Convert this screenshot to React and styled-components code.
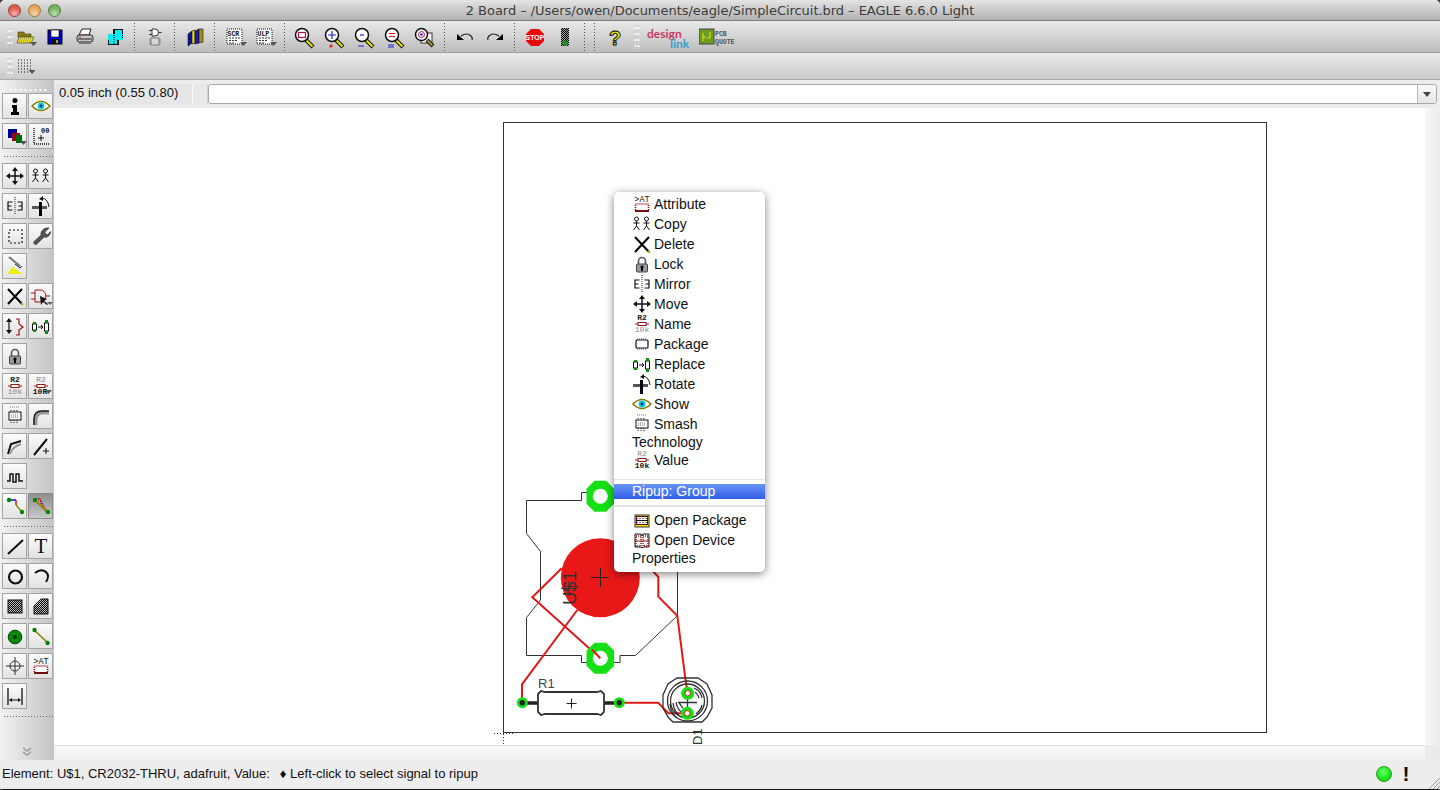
import React from 'react';
import styled, { createGlobalStyle } from 'styled-components';

const GlobalStyle = createGlobalStyle`
  html, body {
    margin: 0;
    padding: 0;
    background: #333;
  }
  body {
    font-family: "Liberation Sans", Arial, sans-serif;
  }
`;

const Dropdown = () => <path d="M17 17h7l-3.5 4z" fill="#555" />;

const Dither = ({ id, color = '#000', back = '#fff' }) => (
  <pattern id={id} width="2" height="2" patternUnits="userSpaceOnUse">
    <rect width="2" height="2" fill={back} />
    <rect width="1" height="1" fill={color} />
    <rect x="1" y="1" width="1" height="1" fill={color} />
  </pattern>
);

const Magnifier = ({ children }) => (
  <>
    <path d="M13 15l7 7" stroke="#111" strokeWidth="4" />
    <path d="M13.5 15.5l6 6" stroke="#e8e800" strokeWidth="2" />
    <circle cx="9" cy="10" r="6.5" fill="#fff" stroke="#111" strokeWidth="1.5" />
    {children}
  </>
);

const labelFont = '"Liberation Mono", monospace';

const ICONS = {
  // top toolbar
  open: (
    <>
      <path d="M5 7h6l1 2h6v3H5z" fill="#8a7a10" stroke="#443" strokeWidth=".6" />
      <path d="M6 12h15l-3 6H4z" fill="#e8e020" stroke="#554" strokeWidth=".8" />
      <path d="M7 14h11M6 16h11" stroke="#887" strokeDasharray="1 1" />
      <Dropdown />
    </>
  ),
  save: (
    <>
      <rect x="5" y="5" width="14" height="14" fill="#0000e0" stroke="#000" />
      <rect x="8" y="5" width="8" height="7" fill="#fff" stroke="#000" strokeWidth=".6" />
      <rect x="8" y="14" width="8" height="5" fill="#111" />
      <rect x="13" y="15" width="2" height="3" fill="#999" />
    </>
  ),
  print: (
    <>
      <path d="M9 4h9l-2 6H6z" fill="#fff" stroke="#222" />
      <rect x="4" y="10" width="16" height="7" rx="2.5" fill="#c4c4c4" stroke="#222" />
      <path d="M5 14h14" stroke="#222" />
      <path d="M6 12h2" stroke="#d04040" />
      <rect x="6" y="17" width="12" height="2" fill="#777" />
    </>
  ),
  cam: (
    <>
      <rect x="10" y="4" width="10" height="6" fill="#111" />
      <rect x="5" y="14" width="11" height="6" fill="#111" />
      <rect x="5" y="9" width="15" height="6" fill="#10e8f0" />
      <rect x="12" y="5" width="7" height="10" fill="#10e8f0" />
      <rect x="6" y="14" width="8" height="5" fill="#10e8f0" />
      <path d="M11 4v15M19.5 4v10M5.5 15v5" stroke="#111" strokeDasharray="1 1" />
    </>
  ),
  sch: (
    <>
      <path d="M9 4h3a3.5 3.5 0 0 1 0 7H9z" fill="#fff" stroke="#333" />
      <path d="M6 5.5h3M6 9.5h3M15.5 7.5h3" stroke="#333" />
      <rect x="8" y="13" width="8" height="7" fill="#d8d8d8" stroke="#777" />
      <path d="M6 15h2M6 18h2M16 15h2M16 18h2" stroke="#777" />
    </>
  ),
  book: (
    <>
      <path d="M5 9l4-3v12l-4 3z" fill="#1010a0" stroke="#111" strokeWidth=".6" />
      <path d="M9 6l3-1v13l-3 1z" fill="#e8d810" stroke="#111" strokeWidth=".6" />
      <path d="M12 6l4-2v14l-4 1z" fill="#1818c0" stroke="#111" strokeWidth=".6" />
      <path d="M16 4h4v13l-4 1z" fill="#a09010" stroke="#111" strokeWidth=".6" />
    </>
  ),
  scr: (
    <>
      <rect x="4" y="4" width="15" height="15" fill="#fff" stroke="#111" strokeDasharray="1 1" />
      <text x="4.5" y="10.5" fontFamily={labelFont} fontWeight="700" fontSize="6.5" fill="#111">SCR</text>
      <path d="M6 13h11M6 15.5h8M6 18h5" stroke="#333" strokeDasharray="2 1" />
      <Dropdown />
    </>
  ),
  ulp: (
    <>
      <rect x="4" y="4" width="15" height="15" fill="#fff" stroke="#111" strokeDasharray="1 1" />
      <text x="4.5" y="10.5" fontFamily={labelFont} fontWeight="700" fontSize="6.5" fill="#111">ULP</text>
      <path d="M6 13h11M6 15.5h8M6 18h5" stroke="#333" strokeDasharray="2 1" />
      <Dropdown />
    </>
  ),
  zoomFit: (
    <Magnifier>
      <rect x="5.5" y="7.5" width="7" height="5" fill="#fff" stroke="#b01050" strokeWidth="1.2" />
    </Magnifier>
  ),
  zoomIn: (
    <>
      <Magnifier>
        <path d="M9 6v8M5 10h8" stroke="#2020d0" strokeWidth="1.2" />
      </Magnifier>
      <path d="M6 21h4M8 19v4" stroke="#e01010" />
    </>
  ),
  zoomOut: (
    <>
      <Magnifier>
        <path d="M7 10h4" stroke="#2020d0" strokeWidth="1.2" />
      </Magnifier>
      <path d="M5 21h6" stroke="#2020d0" />
    </>
  ),
  zoomEqual: (
    <>
      <Magnifier>
        <path d="M6 8.5h6M6 11.5h6" stroke="#e01010" strokeWidth="1.2" />
      </Magnifier>
      <path d="M5 20h6M5 22h6" stroke="#2020d0" />
    </>
  ),
  zoomRedraw: (
    <>
      <rect x="8" y="8" width="11" height="10" fill="#fff" stroke="#333" />
      <path d="M14 15l6 6" stroke="#111" strokeWidth="4" />
      <path d="M14.5 15.5l5 5" stroke="#a8a020" strokeWidth="2" />
      <circle cx="8.5" cy="9.5" r="6" fill="#fff" stroke="#111" strokeWidth="1.5" />
      <circle cx="8.5" cy="9.5" r="3" fill="#fff" stroke="#c01040" />
      <circle cx="8.5" cy="9.5" r="1.3" fill="#2020d0" />
    </>
  ),
  undo: (
    <>
      <path d="M8 11q6-4 10 0 2 2 1 4" fill="none" stroke="#222" strokeWidth="1.2" />
      <path d="M4 9v6h7z" fill="#000" />
    </>
  ),
  redo: (
    <>
      <path d="M16 11q-6-4-10 0-2 2-1 4" fill="none" stroke="#222" strokeWidth="1.2" />
      <path d="M20 9v6h-7z" fill="#000" />
    </>
  ),
  stop: (
    <>
      <path d="M8 4h8l5 5v7l-5 5H8l-5-5V9z" fill="#e80808" />
      <text x="12" y="15" textAnchor="middle" fontFamily='"Liberation Sans", sans-serif' fontWeight="700" fontSize="7" fill="#fff">STOP</text>
    </>
  ),
  go: (
    <>
      <defs>
        <Dither id="goDots" back="#999" />
      </defs>
      <rect x="8" y="3" width="8" height="18" fill="url(#goDots)" />
      <circle cx="12" cy="18" r="2.5" fill="#0c9c0c" />
    </>
  ),
  help: (
    <text x="12" y="19.5" textAnchor="middle" fontFamily='"Liberation Sans", sans-serif' fontWeight="700" fontSize="20" fill="#f4f400" stroke="#000" strokeWidth=".9">?</text>
  ),
  grid: (
    <>
      <path d="M5 3h13M5 6h13M5 9h13M5 12h13M5 15h10" stroke="#111" strokeDasharray="1 2" />
      <path d="M15.5 13h7l-3.5 4z" fill="#555" />
    </>
  ),

  // side toolbar and menu
  info: (
    <>
      <circle cx="12" cy="6.5" r="2.5" fill="#000" />
      <path d="M9 11h5v7h2v3H8v-3h2v-4H9z" fill="#000" />
    </>
  ),
  eye: (
    <>
      <path d="M3 12q9-9 18 0-9 9-18 0z" fill="#fff" stroke="#8a7a00" strokeWidth="1.5" />
      <circle cx="12" cy="12" r="3.4" fill="#00d0e0" />
      <circle cx="12" cy="12" r="1.4" fill="#002080" />
    </>
  ),
  display: (
    <>
      <rect x="5" y="5" width="9" height="9" fill="#000090" />
      <rect x="9" y="9" width="8" height="8" fill="#a00020" />
      <rect x="13" y="11" width="6" height="8" fill="#006800" />
      <Dropdown />
    </>
  ),
  mark: (
    <>
      <path d="M5 4v16M5 20h16" stroke="#111" strokeWidth="1.5" strokeDasharray="1 1" />
      <path d="M12 11v6M9 14h6" stroke="#111" />
      <text x="12" y="9" fontFamily={labelFont} fontSize="7" fontWeight="700" fill="#111">00</text>
    </>
  ),
  move: (
    <>
      <path d="M12 5v14M5 12h14" stroke="#111" strokeWidth="1.5" />
      <path d="M12 3l3 4H9zM12 21l3-4H9zM3 12l4-3v6zM21 12l-4-3v6z" fill="#111" />
    </>
  ),
  copy: (
    <g fill="none" stroke="#111">
      <circle cx="6.5" cy="7" r="2" />
      <path d="M6.5 9v5M3.5 11h6M6.5 14l-3 4M6.5 14l3 4" />
      <circle cx="16.5" cy="7" r="2" />
      <path d="M16.5 9v5M13.5 11h6M16.5 14l-3 4M16.500 14l3 4" />
    </g>
  ),
  mirror: (
    <>
      <path d="M12 3v18" stroke="#222" strokeDasharray="1 1" />
      <path d="M9.5 8H5v8h4.5M5 12h3.5M14.5 8H19v8h-4.5M19 12h-3.5" fill="none" stroke="#111" strokeWidth="1.2" />
    </>
  ),
  rotate: (
    <>
      <rect x="3" y="12" width="15" height="3" fill="#555" />
      <rect x="10" y="8" width="3" height="14" fill="#000" />
      <path d="M13 4q6 1 7 9" fill="none" stroke="#111" />
      <path d="M10 5l4-3v5z" fill="#111" />
    </>
  ),
  group: <rect x="6" y="6" width="13" height="13" fill="none" stroke="#111" strokeWidth="1.2" strokeDasharray="2 2" />,
  change: (
    <path d="M20 4l-4 4 .5 2 2 .5 3-3c.5 3-3 7-6.5 5.5L8 20c-1.5 1.8-4.5-.8-3-2.5L12 11C11 7 16 3 20 4z" fill="#555" stroke="#222" strokeWidth=".5" />
  ),
  paste: (
    <>
      <path d="M6 3l11 9" stroke="#777" strokeWidth="2" />
      <path d="M12 10l5 4 2-2" fill="none" stroke="#222" />
      <path d="M5 20q2-5 5-7l5 4q4 2 5 3z" fill="#f0f000" />
    </>
  ),
  delete: (
    <>
      <path d="M5 5l14 15M19 5L5 20" stroke="#000" strokeWidth="2" />
      <path d="M18 19l2 2" stroke="#c0b000" strokeWidth="1.5" />
    </>
  ),
  add: (
    <>
      <path d="M6 6h5q5 0 6 6-1 6-6 6H6zM2 9h4M2 15h4M17 12h4" fill="none" stroke="#a01010" />
      <path d="M11 12l1 9 2-3 4 3 1-1-4-3 3-2z" fill="#111" />
      <path d="M18 18h6l-3 3z" fill="#666" />
    </>
  ),
  pinswap: (
    <>
      <path d="M6 7v10" stroke="#111" strokeWidth="1.2" />
      <path d="M6 4l3 4H3zM6 20l3-4H3z" fill="#111" />
      <path d="M13 5h3v5l4 3-4 3v5h-3" fill="none" stroke="#a01010" strokeWidth="1.2" />
    </>
  ),
  replace: (
    <>
      <rect x="3.5" y="10" width="4" height="6" fill="#fff" stroke="#111" />
      <rect x="15.500" y="9" width="4" height="8" fill="#fff" stroke="#111" />
      <path d="M9 13h5" stroke="#111" />
      <path d="M12 11l2 2-2 2" fill="none" stroke="#111" />
      <rect x="4" y="8" width="3" height="2" fill="#0a900a" />
      <rect x="4" y="16" width="3" height="2" fill="#0a900a" />
      <rect x="16" y="6" width="3" height="3" fill="#0a900a" />
      <rect x="16" y="17" width="3" height="3" fill="#0a900a" />
    </>
  ),
  lock: (
    <>
      <path d="M8.500 12V9a3.500 3.500 0 0 1 7 0v3" fill="none" stroke="#555" strokeWidth="1.600" />
      <rect x="6.500" y="12" width="11" height="8" rx="1" fill="#9a9a9a" stroke="#444" />
      <path d="M12 15v4" stroke="#000" strokeWidth="2" />
      <circle cx="12" cy="15" r="1.600" fill="#000" />
    </>
  ),
  name: (
    <>
      <text x="12" y="8" textAnchor="middle" fontFamily={labelFont} fontWeight="700" fontSize="8" fill="#222">R2</text>
      <path d="M5 12h14" stroke="#901818" />
      <rect x="8" y="10.5" width="8" height="3" fill="#fff" stroke="#901818" />
      <text x="12" y="20" textAnchor="middle" fontFamily={labelFont} fontSize="8" fill="#888">10k</text>
    </>
  ),
  value: (
    <>
      <text x="12" y="8" textAnchor="middle" fontFamily={labelFont} fontSize="8" fill="#888">R2</text>
      <path d="M5 12h14" stroke="#901818" />
      <rect x="8" y="10.5" width="8" height="3" fill="#fff" stroke="#901818" />
      <text x="12" y="20" textAnchor="middle" fontFamily={labelFont} fontWeight="700" fontSize="8" fill="#111">10k</text>
    </>
  ),
  valueDrop: (
    <>
      <text x="12" y="8" textAnchor="middle" fontFamily={labelFont} fontSize="8" fill="#888">R2</text>
      <path d="M5 12h14" stroke="#901818" />
      <rect x="8" y="10.5" width="8" height="3" fill="#fff" stroke="#901818" />
      <text x="11" y="20" textAnchor="middle" fontFamily={labelFont} fontWeight="700" fontSize="8" fill="#111">10R</text>
      <path d="M16 16h7l-3.5 4z" fill="#555" />
    </>
  ),
  smash: (
    <>
      <rect x="6" y="8" width="12" height="8" fill="#fff" stroke="#111" />
      <path d="M8 6v2M11 6v2M14 6v2M8 16v3M11 16v3M14 16v3" stroke="#111" strokeDasharray="1 1" />
      <path d="M8 11h8M8 13h8" stroke="#666" strokeDasharray="1 1" />
      <path d="M7 3h10" stroke="#777" strokeDasharray="1 1" />
    </>
  ),
  package: (
    <>
      <rect x="6" y="8" width="12" height="8" rx="1" fill="#fff" stroke="#111" strokeWidth="1.2" />
      <path d="M7 7h10M7 17h10" stroke="#a01010" strokeDasharray="1 1" />
    </>
  ),
  miter: (
    <>
      <path d="M7 21v-5q0-7 7-7h6" fill="none" stroke="#999" strokeWidth="3" />
      <path d="M5 21v-6Q5 7 13 7h7" fill="none" stroke="#111" strokeWidth="1.5" />
    </>
  ),
  split: (
    <>
      <path d="M5 20L8 10l10-3" fill="none" stroke="#111" strokeWidth="2" />
      <path d="M7 20q2-7 11-10" fill="none" stroke="#999" strokeWidth="2" />
    </>
  ),
  optimize: (
    <>
      <path d="M5 21L18 5" stroke="#111" strokeWidth="2" />
      <path d="M17 14v6M14 17h6" stroke="#111" />
    </>
  ),
  meander: <path d="M4 17h3v-7h3v8h3v-8h3v7h4" fill="none" stroke="#111" strokeWidth="1.5" />,
  route: (
    <>
      <path d="M6 6h7" stroke="#1010e0" strokeWidth="1.5" />
      <path d="M13 6v5" stroke="#e01010" strokeWidth="1.5" />
      <path d="M13 11l6 7" stroke="#908800" strokeWidth="1.5" />
      <circle cx="6" cy="6" r="2.200" fill="#0a800a" />
      <circle cx="19" cy="18" r="2.200" fill="#0a800a" />
    </>
  ),
  ripup: (
    <>
      <path d="M7 5l5 1v4l7 8" fill="none" stroke="#d02020" strokeDasharray="1 1" strokeWidth="2" />
      <path d="M6 6l12 12" stroke="#908800" strokeWidth="1.8" />
      <path d="M10 4l5 8" stroke="#2020b0" strokeDasharray="1 1" />
      <circle cx="6" cy="6" r="2.200" fill="#0a800a" />
      <circle cx="19" cy="18" r="2.200" fill="#0a800a" />
    </>
  ),
  wire: <path d="M5 20L20 6" stroke="#111" strokeWidth="2" />,
  text: (
    <text x="12" y="19" textAnchor="middle" fontFamily='"Liberation Serif", serif' fontSize="21" fill="#111">T</text>
  ),
  circle: <circle cx="12.500" cy="13" r="6.500" fill="none" stroke="#111" strokeWidth="2.200" />,
  arc: <path d="M6 9q6-5 11-1 4 4 0 10" fill="none" stroke="#111" strokeWidth="2" />,
  rect: (
    <>
      <defs>
        <Dither id="rectDots" back="#bbb" />
      </defs>
      <rect x="5" y="6" width="14" height="13" fill="url(#rectDots)" stroke="#111" />
    </>
  ),
  polygon: (
    <>
      <defs>
        <Dither id="polyDots" back="#bbb" />
      </defs>
      <path d="M5 12l7-7h7v15H5z" fill="url(#polyDots)" stroke="#111" />
    </>
  ),
  via: (
    <>
      <circle cx="12" cy="13" r="6.800" fill="#0a880a" stroke="#064006" />
      <circle cx="12" cy="13" r="2" fill="#043004" />
    </>
  ),
  signal: (
    <>
      <path d="M5 6l14 13" stroke="#8a8000" strokeWidth="1.600" />
      <circle cx="5.500" cy="6" r="2.200" fill="#0a800a" />
      <circle cx="18.500" cy="19" r="2.200" fill="#0a800a" />
    </>
  ),
  hole: (
    <>
      <circle cx="12" cy="12" r="5" fill="none" stroke="#333" />
      <path d="M12 3v18M3 12h18" stroke="#333" />
    </>
  ),
  attribute: (
    <>
      <text x="12" y="9.500" textAnchor="middle" fontFamily={labelFont} fontSize="8.500" fill="#111">&gt;AT</text>
      <rect x="5.500" y="12" width="13" height="7" fill="#fff" stroke="#a01010" strokeWidth="1.600" strokeDasharray="1 1" />
      <rect x="5" y="18" width="14" height="2" fill="#701010" />
    </>
  ),
  dimension: (
    <>
      <path d="M5 4v17M19 4v17" stroke="#111" strokeWidth="1.300" />
      <path d="M7 16h10" stroke="#111" />
      <path d="M6 16l3-2v4zM18 16l-3-2v4z" fill="#111" />
    </>
  ),
  openPackage: (
    <>
      <rect x="5" y="7" width="14" height="12" fill="#f0e000" stroke="#333" />
      <rect x="6.500" y="8.500" width="11" height="8" fill="#fff" stroke="#7a1010" />
      <path d="M7 8v9M10 8v9M13 8v9M16 8v9" stroke="#111" strokeDasharray="1 1" />
      <path d="M6 12.500h12" stroke="#111" />
    </>
  ),
  openDevice: (
    <>
      <path d="M5 6h6l1 2 1-2h6v13h-6l-1 1-1-1H5z" fill="#fff" stroke="#111" />
      <path d="M6 8h5v10H6zM13 8h5v10h-5z" fill="#fff" stroke="#a01010" strokeWidth="1.400" strokeDasharray="1 1" />
      <path d="M5 13h14" stroke="#a01010" />
    </>
  ),
};

const SIDE_ROWS = [
  [['info', 'eye'], ['display', 'mark']],
  [
    ['move', 'copy'],
    ['mirror', 'rotate'],
    ['group', 'change'],
    ['paste'],
    ['delete', 'add'],
    ['pinswap', 'replace'],
    ['lock'],
    ['name', 'valueDrop'],
    ['smash', 'miter'],
    ['split', 'optimize'],
    ['meander'],
    ['route', 'ripup'],
  ],
  [
    ['wire', 'text'],
    ['circle', 'arc'],
    ['rect', 'polygon'],
    ['via', 'signal'],
    ['hole', 'attribute'],
    ['dimension'],
  ],
];

const TOP_TOOLS = [
  ['open', 'save', 'print', 'cam'],
  ['sch'],
  ['book'],
  ['scr', 'ulp'],
  ['zoomFit', 'zoomIn', 'zoomOut', 'zoomEqual', 'zoomRedraw'],
  ['undo', 'redo'],
  ['stop', 'go'],
  [],
  ['help'],
];

const MENU_TOP = [
  { label: 'Attribute', icon: 'attribute' },
  { label: 'Copy', icon: 'copy' },
  { label: 'Delete', icon: 'delete' },
  { label: 'Lock', icon: 'lock' },
  { label: 'Mirror', icon: 'mirror' },
  { label: 'Move', icon: 'move' },
  { label: 'Name', icon: 'name' },
  { label: 'Package', icon: 'package' },
  { label: 'Replace', icon: 'replace' },
  { label: 'Rotate', icon: 'rotate' },
  { label: 'Show', icon: 'eye' },
  { label: 'Smash', icon: 'smash' },
  { label: 'Technology' },
  { label: 'Value', icon: 'value' },
];

const MENU_BOTTOM = [
  { label: 'Open Package', icon: 'openPackage' },
  { label: 'Open Device', icon: 'openDevice' },
  { label: 'Properties' },
];

const Icon = ({ name, size = 24 }) => (
  <IconSvg viewBox="0 0 24 24" width={size} height={size}>
    {ICONS[name]}
  </IconSvg>
);

const MenuRow = ({ label, icon }) => (
  <MenuItem $plain={!icon}>
    {icon && (
      <MenuIcon>
        <Icon name={icon} />
      </MenuIcon>
    )}
    {label}
  </MenuItem>
);

const BoardDrawing = () => (
  <BoardSvg viewBox="54 108 1371 637">
    <rect x="503.5" y="122.5" width="763" height="610" fill="none" stroke="#333" />
    <path d="M494 733.5h20M503.5 722v22" stroke="#333" strokeDasharray="1 2" />

    <path
      d="M581.5 500.5H526.5V533.5L540.5 551.5V600L526.5 617.5V655.5H581.5V662.5H620V655.5H635.5L677.5 615.5V570"
      fill="none"
      stroke="#333"
    />
    <path d="M581.5 500.5V492.5H620" fill="none" stroke="#333" />

    <circle cx="600.3" cy="577.7" r="39.5" fill="#e81818" />
    <path d="M591 577.5h18M600.5 568v19" stroke="#222" />

    <path d="M522 703V684.3L577.3 610" fill="none" stroke="#e01818" strokeWidth="2" />
    <path d="M561.7 568.3L532.3 597.3L600.3 658.3" fill="none" stroke="#e01818" strokeWidth="2" />
    <path
      d="M653.3 571.7L658.3 576.7V596.7L677.3 615.7L685.3 678.3L687.7 693.3"
      fill="none"
      stroke="#e01818"
      strokeWidth="2"
    />
    <path d="M619.3 702.7H658.3L668.3 713.3H687.3" fill="none" stroke="#e01818" strokeWidth="2" />

    <text
      transform="translate(576 605) rotate(-90)"
      fontFamily='"Liberation Sans", sans-serif'
      fontSize="18.5"
      fill="#333"
    >
      U$1
    </text>
    <path d="M561 588.5h16M569 581v15" stroke="#333" />

    <path d="M594.5 480.8h11.6l8 8v15l-8 8h-11.6l-8-8v-15z" fill="#14e014" />
    <circle cx="600.3" cy="496.3" r="7.5" fill="#fff" />
    <path d="M594.5 642.8h11.6l8 8v15l-8 8h-11.6l-8-8v-15z" fill="#14e014" />
    <circle cx="600.3" cy="658.3" r="7.5" fill="#fff" />
    <path d="M592 649.5L600.3 658.3" stroke="#e01818" strokeWidth="2" />

    <path d="M522 703h16M604 703h15" stroke="#222" strokeWidth="3.5" />
    <path
      d="M538 694L541 691L545 692H597L601 691L604 694V712L601 715L597 714H545L541 715L538 712Z"
      fill="#fff"
      stroke="#333"
      strokeWidth="1.8"
    />
    <path d="M566.5 703.5h10M571.5 698.5v10" stroke="#222" />
    <text x="538" y="688" fontFamily='"Liberation Sans", sans-serif' fontSize="13" fill="#444">R1</text>
    <circle cx="522.3" cy="702.7" r="5.5" fill="#14e014" />
    <circle cx="522.3" cy="702.7" r="2.7" fill="#222" />
    <circle cx="619.3" cy="702.7" r="5.5" fill="#14e014" />
    <circle cx="619.3" cy="702.7" r="2.7" fill="#222" />

    <g fill="none" stroke="#333" strokeWidth="1.3">
      <path d="M677 678h21l9 6 5 11v13l-5 9-5 5H673l-5-5-5-9v-13l5-11z" />
      <circle cx="687.5" cy="701" r="20" />
      <circle cx="687.5" cy="701" r="17" />
      <path d="M670 704q1 9 7 14M673 703q1 8 6 12M676 702q1 6 5 10M679 702q1 3 4 6M694 688q7 3 8 10M695 692q3 2 4 6M696 714q5-4 6-9" />
      <path d="M678 702.5h19M687.5 693v20" />
    </g>
    <circle cx="687.7" cy="693.3" r="6.5" fill="#14e014" />
    <circle cx="687.7" cy="693.3" r="2.8" fill="#fff" stroke="#d01818" />
    <circle cx="687.3" cy="713.3" r="6.5" fill="#14e014" />
    <circle cx="687.3" cy="713.3" r="2.8" fill="#fff" stroke="#d01818" />

    <text
      transform="translate(702 745) rotate(-90)"
      fontFamily='"Liberation Sans", sans-serif'
      fontSize="13"
      fill="#333"
    >
      D1
    </text>
  </BoardSvg>
);

const App = () => (
  <>
    <GlobalStyle />
    <Window>
      <TitleBar>
        <Lights>
          <Light $color="#e05a52" />
          <Light $color="#e6a658" />
          <Light $color="#74b45c" />
        </Lights>
        <Title>2 Board – /Users/owen/Documents/eagle/SimpleCircuit.brd – EAGLE 6.6.0 Light</Title>
      </TitleBar>

      <TopToolbar>
        <Gripper />
        {TOP_TOOLS.map((group, i) => (
          <React.Fragment key={i}>
            {i > 0 && <ToolSep />}
            {group.map((name) => (
              <ToolSlot key={name}>
                <Icon name={name} />
              </ToolSlot>
            ))}
          </React.Fragment>
        ))}
        <GripperInline />
        <LinkLogo viewBox="0 0 42 28" width="42" height="28">
          <text x="0" y="15" fontFamily="Lato, sans-serif" fontWeight="700" fontSize="12" fill="#c83a66">design</text>
          <text x="23" y="25" fontFamily="Lato, sans-serif" fontWeight="700" fontSize="12" fill="#3a9ccc">link</text>
        </LinkLogo>
        <QuoteLogo viewBox="0 0 36 18" width="36" height="18">
          <rect x="0" y="1" width="15" height="15" fill="#6c9c1c" stroke="#445" />
          <path d="M4 5v8M4 9h3M11 4v6M8 10h3" stroke="#f0e020" />
          <text x="16" y="8" fontFamily={labelFont} fontWeight="700" fontSize="6.5" fill="#555">PCB</text>
          <text x="16" y="16" fontFamily={labelFont} fontWeight="700" fontSize="6.5" fill="#555">QUOTE</text>
        </QuoteLogo>
      </TopToolbar>

      <GridToolbar>
        <Gripper />
        <ToolSlot>
          <IconSvg viewBox="0 0 24 18" width="24" height="18">
            {ICONS.grid}
          </IconSvg>
        </ToolSlot>
      </GridToolbar>

      <Body>
        <SideBar>
          <SideGrip />
          {SIDE_ROWS.map((section, s) => (
            <React.Fragment key={s}>
              {section.map((row, r) => (
                <ToolRow key={r}>
                  {row.map((name) => (
                    <ToolButton key={name} $active={name === 'ripup'}>
                      <Icon name={name} />
                    </ToolButton>
                  ))}
                </ToolRow>
              ))}
              <SideSep />
            </React.Fragment>
          ))}
          <MoreTools viewBox="0 0 10 10" width="10" height="10">
            <path d="M1 1l4 3 4-3M1 5l4 3 4-3" fill="none" stroke="#999" strokeWidth="1.5" />
          </MoreTools>
        </SideBar>

        <Main>
          <CommandRow>
            <CoordBox>0.05 inch (0.55 0.80)</CoordBox>
            <CoordStub />
            <CommandInput>
              <CommandArrow />
            </CommandInput>
          </CommandRow>
          <CanvasRow>
            <Canvas>
              <BoardDrawing />
              <ContextMenu>
                {MENU_TOP.map((item) => (
                  <MenuRow key={item.label} {...item} />
                ))}
                <MenuSep $top={8.5} $bottom={4} />
                <MenuActive>Ripup: Group</MenuActive>
                <MenuSep $top={6} $bottom={3.5} />
                {MENU_BOTTOM.map((item) => (
                  <MenuRow key={item.label} {...item} />
                ))}
              </ContextMenu>
            </Canvas>
            <VScroll />
          </CanvasRow>
          <HScrollRow>
            <HScroll />
            <ScrollCorner />
          </HScrollRow>
        </Main>
      </Body>

      <StatusBar>
        <StatusText>Element: U$1, CR2032-THRU, adafruit, Value:</StatusText>
        <StatusHint>♦ Left-click to select signal to ripup</StatusHint>
        <StatusLed />
        <StatusMark>!</StatusMark>
        <ResizeGrip viewBox="0 0 12 12" width="12" height="12">
          <path d="M1 12L12 1M5 12L12 5M9 12L12 9" stroke="#999" />
        </ResizeGrip>
      </StatusBar>
    </Window>
  </>
);

const Window = styled.div`
  width: 1440px;
  height: 790px;
  display: flex;
  flex-direction: column;
  overflow: hidden;
  background: #ededed;
  border-radius: 5px 5px 3px 3px;
`;

const TitleBar = styled.div`
  position: relative;
  height: 20px;
  flex: none;
  display: flex;
  align-items: center;
  justify-content: center;
  background: linear-gradient(#e4e4e4, #b2b2b2);
  border-bottom: 1px solid #7e7e7e;
`;

const Lights = styled.div`
  position: absolute;
  left: 8px;
  top: 4px;
  display: flex;
  gap: 7px;
`;

const Light = styled.span`
  width: 13px;
  height: 13px;
  box-sizing: border-box;
  border-radius: 50%;
  background: radial-gradient(circle at 50% 80%, #fff8 0, transparent 60%), ${(p) => p.$color};
  border: 1px solid rgba(0, 0, 0, 0.3);
`;

const Title = styled.div`
  font-family: "DejaVu Sans", sans-serif;
  font-size: 13px;
  letter-spacing: -0.04px;
  color: #3c3c3c;
  white-space: nowrap;
`;

const TopToolbar = styled.div`
  height: 31px;
  flex: none;
  display: flex;
  align-items: center;
  padding-left: 7px;
  background: linear-gradient(#e9e9e9, #bdbdbd);
  border-bottom: 1px solid #9c9c9c;
`;

const GridToolbar = styled(TopToolbar)`
  height: 26px;
  background: linear-gradient(#ebebeb, #cacaca);
  border-bottom: 1px solid #acacac;
`;

const Gripper = styled.div`
  width: 6px;
  height: 17px;
  margin-right: -3.5px;
  flex: none;
  background-image: radial-gradient(circle, #f4f4f4 1px, transparent 1.3px),
    radial-gradient(circle, #cfcfcf 1px, transparent 1.3px);
  background-size: 3px 6px;
  background-position: 0 0, 3px 3px;
`;

const GripperInline = styled(Gripper)`
  height: 24px;
  margin: 0 7px 0 4px;
`;

const ToolSlot = styled.div`
  width: 30px;
  height: 30px;
  flex: none;
  display: flex;
  align-items: center;
  justify-content: center;
`;

const ToolSep = styled.div`
  width: 1px;
  height: 28px;
  flex: none;
  margin: 0 4.5px;
  background-image: linear-gradient(#555 50%, transparent 50%);
  background-size: 1px 3px;
`;

const IconSvg = styled.svg`
  display: block;
  flex: none;
  overflow: visible;
`;

const LinkLogo = styled.svg`
  display: block;
  flex: none;
`;

const QuoteLogo = styled.svg`
  display: block;
  flex: none;
  margin-left: 10px;
`;

const Body = styled.div`
  flex: 1;
  min-height: 0;
  display: flex;
`;

const SideBar = styled.div`
  width: 54px;
  flex: none;
  box-sizing: border-box;
  padding: 8px 0 0 2px;
  display: flex;
  flex-direction: column;
  gap: 4px;
  background: linear-gradient(90deg, #f2f2f2, #c4c4c4);
`;

const SideGrip = styled.div`
  width: 40px;
  height: 4px;
  margin: 0 0 -3px 6px;
  flex: none;
  background-image: radial-gradient(circle, #f8f8f8 1px, transparent 1.3px);
  background-size: 5px 4px;
`;

const ToolRow = styled.div`
  display: grid;
  grid-template-columns: 25px 25px;
  grid-auto-rows: 26px;
  gap: 1px;
  flex: none;
`;

const ToolButton = styled.div`
  box-sizing: border-box;
  display: flex;
  align-items: center;
  justify-content: center;
  border: 1.5px solid ${(p) => (p.$active ? '#8c8c8c' : '#a4a4a4')};
  background: ${(p) =>
    p.$active ? 'linear-gradient(#8e8e8e, #c8c8c8)' : 'linear-gradient(#fbfbfb, #e2e2e2)'};
`;

const SideSep = styled.div`
  height: 1px;
  margin: 2.5px 0 2.5px 2px;
  width: 50px;
  flex: none;
  background-image: linear-gradient(90deg, #666 40%, transparent 40%);
  background-size: 3px 1px;
`;

const MoreTools = styled.svg`
  display: block;
  flex: none;
  margin: auto 0 3px 20px;
`;

const Main = styled.div`
  flex: 1;
  min-width: 0;
  display: flex;
  flex-direction: column;
`;

const CommandRow = styled.div`
  height: 28px;
  flex: none;
  box-sizing: border-box;
  display: flex;
  align-items: stretch;
  padding: 4px 3px 4px 0;
  background: #ececec;
`;

const CoordBox = styled.div`
  width: 139px;
  flex: none;
  box-sizing: border-box;
  padding: 0 0 3px 5px;
  display: flex;
  align-items: center;
  font-size: 13px;
  color: #111;
  background: #e6e6e6;
  border-right: 1px solid #f6f6f6;
`;

const CoordStub = styled.div`
  width: 15px;
  flex: none;
  box-sizing: border-box;
  background: #e8e8e8;
  border-right: 1px solid #cfcfcf;
`;

const CommandInput = styled.div`
  flex: 1;
  display: flex;
  justify-content: flex-end;
  background: #fff;
  border: 1px solid #a8a8a8;
  border-radius: 3px;
`;

const CommandArrow = styled.div`
  width: 18px;
  position: relative;
  background: linear-gradient(#fafafa, #e6e6e6);
  border-left: 1px solid #b8b8b8;
  border-radius: 0 3px 3px 0;

  &::after {
    content: '';
    position: absolute;
    left: 5px;
    top: 7px;
    border-left: 4px solid transparent;
    border-right: 4px solid transparent;
    border-top: 5px solid #444;
  }
`;

const CanvasRow = styled.div`
  flex: 1;
  min-height: 0;
  display: flex;
`;

const Canvas = styled.div`
  position: relative;
  flex: 1;
  min-width: 0;
  background: #fff;
  overflow: visible;
`;

const BoardSvg = styled.svg`
  display: block;
  width: 100%;
  height: 100%;
`;

const VScroll = styled.div`
  width: 15px;
  flex: none;
  background: linear-gradient(90deg, #f6f6f6, #ececec);
`;

const HScrollRow = styled.div`
  height: 15px;
  flex: none;
  display: flex;
`;

const HScroll = styled.div`
  flex: 1;
  border-top: 1px solid #dedede;
  background: linear-gradient(#f8f8f8, #f2f2f2);
`;

const ScrollCorner = styled.div`
  width: 15px;
  flex: none;
  background: #ebebeb;
`;

const ContextMenu = styled.div`
  position: absolute;
  left: 560px;
  top: 84px;
  width: 151px;
  box-sizing: border-box;
  padding: 2px 0 6px;
  background: #fff;
  border-radius: 5px;
  box-shadow: 0 2px 9px rgba(0, 0, 0, 0.5);
  font-size: 14px;
  color: #111;
`;

const MenuItem = styled.div`
  height: ${(p) => (p.$plain ? 16 : 20)}px;
  display: flex;
  align-items: center;
  padding-left: ${(p) => (p.$plain ? 18 : 16)}px;
`;

const MenuIcon = styled.span`
  width: 24px;
  height: 20px;
  flex: none;
  display: flex;
  align-items: center;
  justify-content: center;
`;

const MenuSep = styled.div`
  height: 1.5px;
  background: #e4e4e4;
  margin: ${(p) => p.$top}px 0 ${(p) => p.$bottom}px;
`;

const MenuActive = styled.div`
  height: 15px;
  display: flex;
  align-items: center;
  padding: 0 0 1px 18px;
  box-sizing: border-box;
  color: #fff;
  background: linear-gradient(#6a94f6, #2f5ee8);
`;

const StatusBar = styled.div`
  height: 30px;
  flex: none;
  box-sizing: border-box;
  position: relative;
  display: flex;
  align-items: center;
  padding: 0 30px 2px 2px;
  background: #ededed;
  border-bottom: 1px solid #111;
  font-size: 13px;
  color: #111;
`;

const StatusText = styled.span`
  white-space: nowrap;
`;

const StatusHint = styled.span`
  margin-left: 10px;
  white-space: nowrap;
`;

const StatusLed = styled.span`
  width: 16px;
  height: 16px;
  margin-left: auto;
  border-radius: 50%;
  background: radial-gradient(circle at 45% 35%, #66ff66, #10e010 70%);
  border: 1px solid #1e9a1e;
  box-sizing: border-box;
`;

const StatusMark = styled.span`
  width: 8px;
  margin-left: 10px;
  text-align: center;
  font-size: 21px;
  font-weight: 700;
  color: #111;
`;

const ResizeGrip = styled.svg`
  position: absolute;
  right: 0;
  bottom: 0;
`;

export default App;
